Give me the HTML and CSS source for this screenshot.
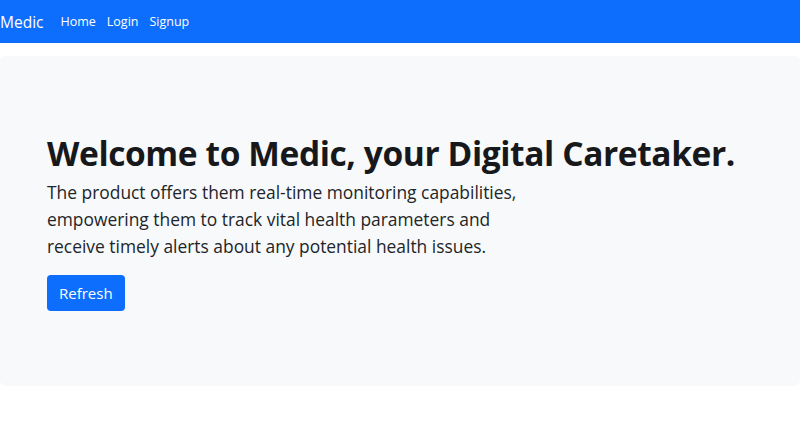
FILE: index.html
```html
<!DOCTYPE html>
<html lang="en">
<head>
    <meta charset="UTF-8">
    <meta name="viewport" content="width=device-width, initial-scale=1.0">
    <title>Medic</title>
    <link rel="stylesheet" href="styles.css">
</head>
<body>
    <nav class="navbar">
        <a class="brand" href="#">Medic</a>
        <a class="nav-link" href="#">Home</a>
        <a class="nav-link" href="#">Login</a>
        <a class="nav-link" href="#">Signup</a>
    </nav>
    <div class="jumbotron">
        <h1>Welcome to Medic, your Digital Caretaker.</h1>
        <p class="lead">The product offers them real-time monitoring capabilities, empowering them to track vital health parameters and receive timely alerts about any potential health issues.</p>
        <button class="btn-refresh" type="button">Refresh</button>
    </div>
</body>
</html>
```

FILE: styles.css
```css
body {
    margin: 0;
    font-family: "Open Sans", "Noto Sans", sans-serif;
    color: #212529;
    background-color: #fff;
}
.navbar {
    display: flex;
    align-items: center;
    height: 43px;
    background-color: #0d6efd;
}
.brand {
    color: #fff;
    font-size: 15.5px;
    text-decoration: none;
    margin-right: 17px;
}
.nav-link {
    color: #fff;
    font-size: 12.5px;
    text-decoration: none;
    margin-right: 11px;
}
.jumbotron {
    display: flex;
    flex-direction: column;
    align-items: flex-start;
    height: 330px;
    box-sizing: border-box;
    margin-top: 13px;
    padding: 77px 47px 0;
    background-color: #f8f9fa;
    border-radius: 6px;
}
h1 {
    margin: 0 0 5.5px;
    font-size: 33.5px;
    font-weight: 700;
    letter-spacing: -0.4px;
    line-height: 1.2;
    white-space: nowrap;
    color: #16181b;
}
.lead {
    margin: 0 0 15px;
    max-width: 485px;
    font-size: 17.4px;
    line-height: 27px;
}
.btn-refresh {
    padding: 0 12px;
    height: 36px;
    font-family: inherit;
    font-size: 15px;
    color: #fff;
    background-color: #0d6efd;
    border: none;
    border-radius: 4px;
    cursor: pointer;
}
```
